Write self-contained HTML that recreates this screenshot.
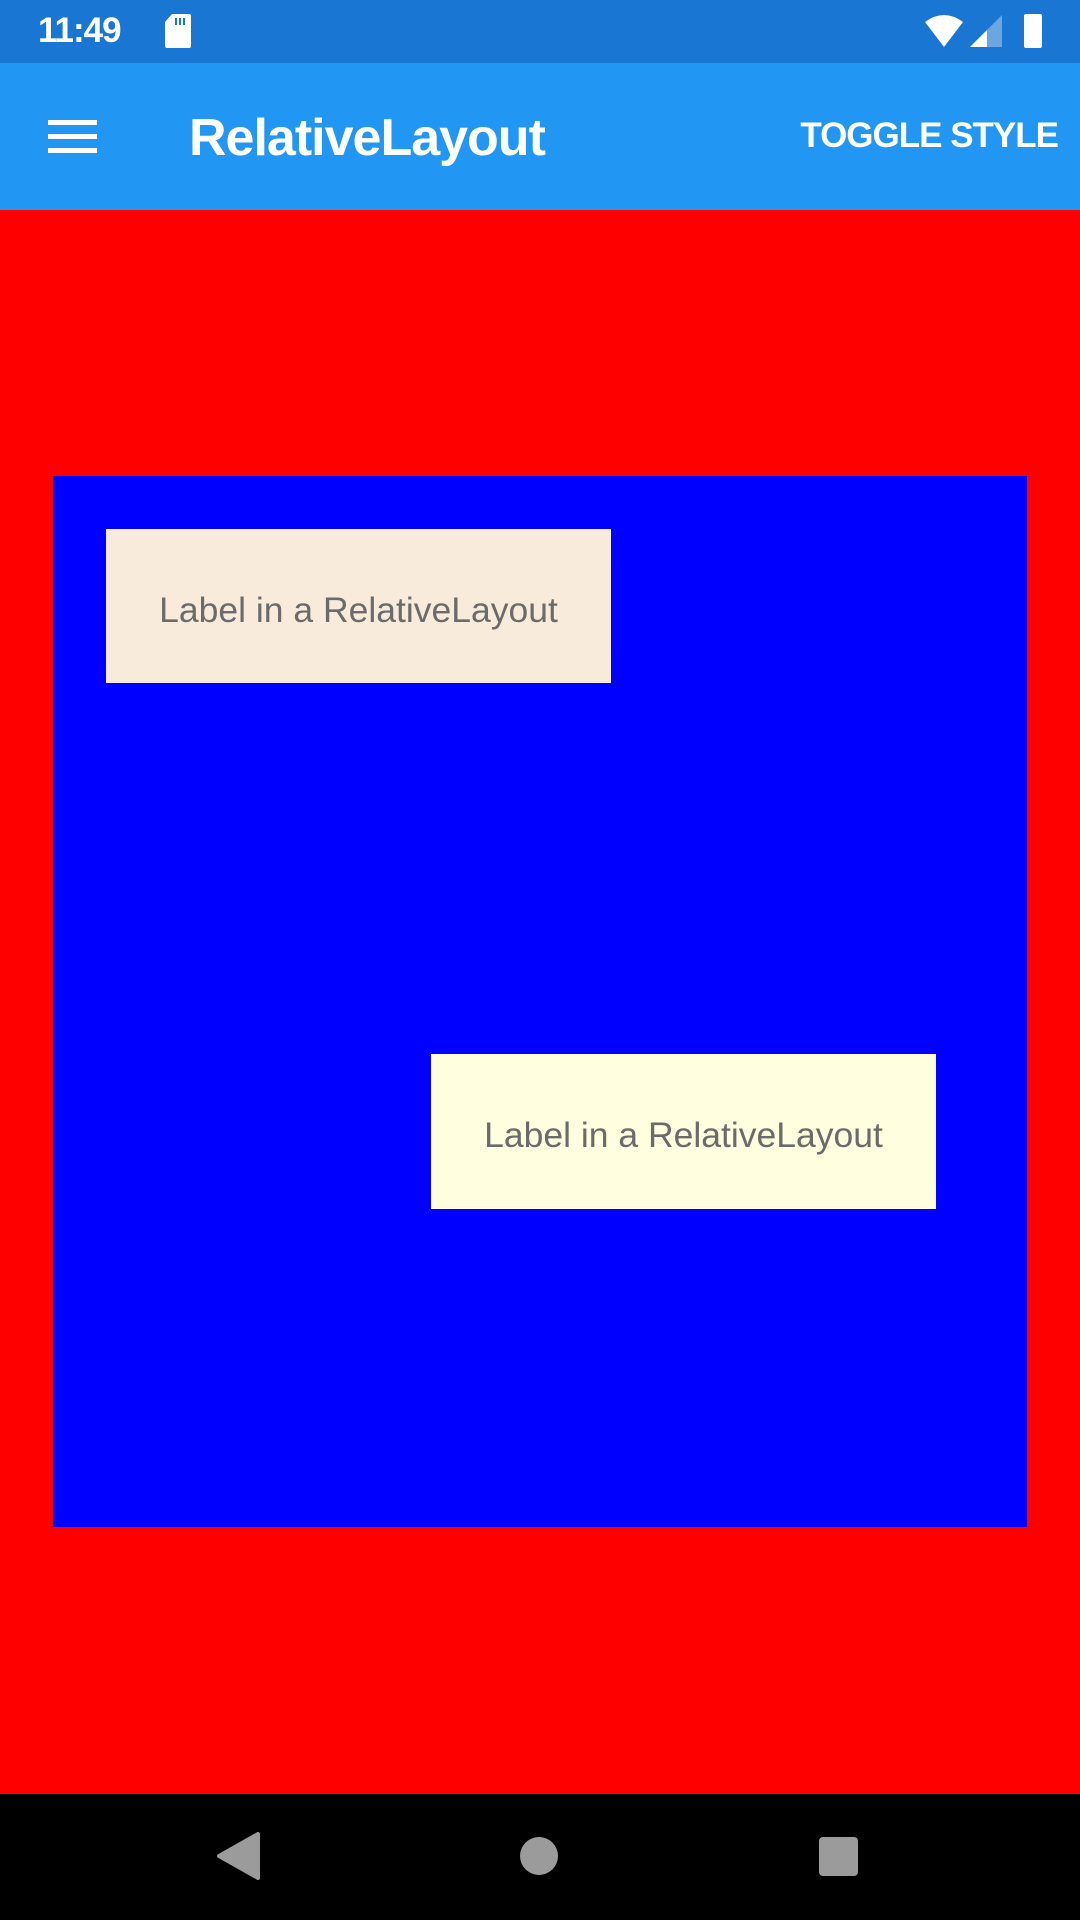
<!DOCTYPE html>
<html><head><style>
body{margin:0;width:1080px;height:1920px;position:relative;overflow:hidden;background:#f00;font-family:"Liberation Sans",sans-serif}
.a{position:absolute}
.lbl{background:#f9ebdb;color:#6b6b6b;font-size:35.5px;display:flex;align-items:center;justify-content:center;white-space:nowrap;padding-top:8px;box-sizing:border-box}
</style></head><body>
<div class="a" style="left:0;top:0;width:1080px;height:63px;background:#1976d2"></div>
<div class="a" style="left:38px;top:11px;color:#fff;font-size:35px;font-weight:bold;letter-spacing:-1px">11:49</div>
<svg class="a" style="left:165px;top:14px" width="26" height="34"><path d="M7 0H24a2 2 0 0 1 2 2V32a2 2 0 0 1-2 2H2a2 2 0 0 1-2-2V8Z" fill="#fff"/><path d="M11 4v7M15 4v7M19 4v7" stroke="#1976d2" stroke-width="2"/></svg>
<svg class="a" style="left:925px;top:14px" width="120" height="36"><path d="M0 8Q19-6 38 8L19 33Z" fill="#fff"/><path d="M45 33L77 1V33Z" fill="#6aa6e0"/><path d="M45 33L62 16V33Z" fill="#fff"/><rect x="99" y="0" width="18" height="34" rx="2" fill="#fff"/></svg>
<div class="a" style="left:0;top:63px;width:1080px;height:147px;background:#2196f3"></div>
<div class="a" style="left:48px;top:120px;width:49px;height:5px;background:#fff"></div>
<div class="a" style="left:48px;top:134px;width:49px;height:5px;background:#fff"></div>
<div class="a" style="left:48px;top:148px;width:49px;height:5px;background:#fff"></div>
<div class="a" style="left:189px;top:108px;color:#fff;font-size:52px;font-weight:bold;letter-spacing:-1px">RelativeLayout</div>
<div class="a" style="right:22px;top:116px;color:#fff;font-size:35px;font-weight:bold;letter-spacing:-1px">TOGGLE STYLE</div>
<div class="a" style="left:53px;top:476px;width:974px;height:1051px;background:#00f"></div>
<div class="a lbl" style="left:106px;top:529px;width:505px;height:154px">Label in a RelativeLayout</div>
<div class="a lbl" style="left:431px;top:1054px;width:505px;height:155px;background:#ffffe0">Label in a RelativeLayout</div>
<div class="a" style="left:0;top:1794px;width:1080px;height:126px;background:#000"></div>
<svg class="a" style="left:0;top:1794px" width="1080" height="126"><path d="M258 40V84L219 62Z" fill="#9b9b9b" stroke="#9b9b9b" stroke-width="4" stroke-linejoin="round"/><circle cx="539" cy="62" r="19" fill="#9b9b9b"/><rect x="819" y="43" width="39" height="39" rx="4" fill="#9b9b9b"/></svg>
</body></html>
